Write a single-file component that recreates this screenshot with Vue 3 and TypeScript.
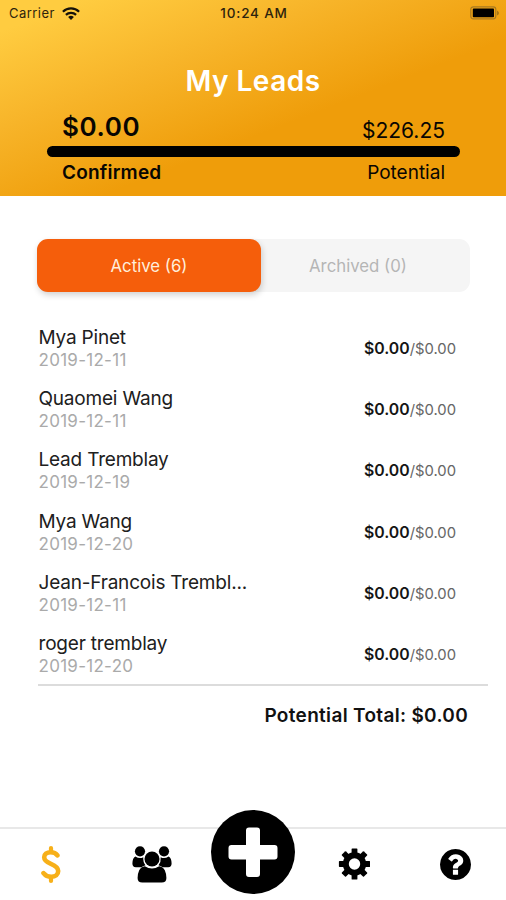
<script setup lang="ts">
import { ref } from 'vue'

interface Lead {
  name: string
  date: string
  confirmed: string
  potential: string
}

const leads: Lead[] = [
  { name: 'Mya Pinet', date: '2019-12-11', confirmed: '$0.00', potential: '$0.00' },
  { name: 'Quaomei Wang', date: '2019-12-11', confirmed: '$0.00', potential: '$0.00' },
  { name: 'Lead Tremblay', date: '2019-12-19', confirmed: '$0.00', potential: '$0.00' },
  { name: 'Mya Wang', date: '2019-12-20', confirmed: '$0.00', potential: '$0.00' },
  { name: 'Jean-Francois Trembl...', date: '2019-12-11', confirmed: '$0.00', potential: '$0.00' },
  { name: 'roger tremblay', date: '2019-12-20', confirmed: '$0.00', potential: '$0.00' },
]

const tabs = ['Active (6)', 'Archived (0)']
const selected = ref(0)
const teeth = [0, 45, 90, 135, 180, 225, 270, 315]
</script>

<template>
  <div class="screen">
    <header class="hero">
      <div class="status">
        <div class="carrier">
          <span>Carrier</span>
          <svg class="wifi" viewBox="0 0 18 13">
            <g fill="none" stroke="#17120a" stroke-width="2.2">
              <path d="M.9 4.7a11.6 11.6 0 0 1 16.200 0" />
              <path d="M3.900 7.900a7.300 7.300 0 0 1 10.200 0" />
            </g>
            <path fill="#17120a" d="M6.100 10.100a4.200 4.200 0 0 1 5.800 0L9 13z" />
          </svg>
        </div>
        <span class="clock">10:24 AM</span>
        <div class="power">
          <svg class="battery" viewBox="0 0 29 14">
            <rect x=".8" y=".8" width="25" height="12" rx="2.500" fill="none" stroke="#a87a20" stroke-width="1.200" />
            <rect x="2.800" y="2.600" width="21.200" height="8.600" rx=".8" />
            <path fill="#a87616" d="M27 4.500q2 1 2 2.500t-2 2.500z" />
          </svg>
        </div>
      </div>
      <h1>My Leads</h1>
      <div class="amounts">
        <strong>$0.00</strong>
        <span>$226.25</span>
      </div>
      <div class="bar"></div>
      <div class="labels">
        <strong>Confirmed</strong>
        <span>Potential</span>
      </div>
    </header>

    <main>
      <div class="tabs">
        <button v-for="(tab, i) in tabs" :key="tab" :class="{ on: selected === i }" @click="selected = i">
          {{ tab }}
        </button>
      </div>
      <ul class="leads">
        <li v-for="lead in leads" :key="lead.name">
          <div>
            <div class="name">{{ lead.name }}</div>
            <div class="date">{{ lead.date }}</div>
          </div>
          <div class="sum"><b>{{ lead.confirmed }}</b><span>/{{ lead.potential }}</span></div>
        </li>
      </ul>
      <div class="total"><span>Potential Total: $0.00</span></div>
    </main>

    <nav>
      <a>
        <svg class="dollar" viewBox="0 0 20 37">
          <g fill="none" stroke="#f7b019" stroke-linecap="round" stroke-linejoin="round">
            <path stroke-width="4.200" d="M10 2.100v4M10 31v3.900" />
            <path stroke-width="4.600" d="M16.400 9.400C14.800 7.100 12.500 6.300 9.700 6.300 5.700 6.300 3.200 8.300 3.200 11.300c0 3.400 2.600 4.900 6.700 6.500 4.400 1.800 7.300 3.500 7.300 7.200 0 3.500-2.800 5.800-7 5.800-3.400 0-5.900-1.300-7.700-3.700" />
          </g>
        </svg>
      </a>
      <a>
        <svg class="people" viewBox="0 0 40 37">
          <circle cx="20" cy="13" r="7.500" />
          <circle cx="8" cy="5.300" r="5.100" />
          <circle cx="32" cy="5.300" r="5.100" />
          <path d="M3.400 10.500Q7.500 13.200 11.300 11.200q-.5 4.600 2.200 8.100-2.600 1-4.200 1.900H3.800Q.4 21.200.4 17.600q0-5.400 3-7.100z" />
          <path d="M36.600 10.500Q32.500 13.200 28.700 11.200q.5 4.600-2.200 8.100 2.600 1 4.200 1.900h5.500q3.400 0 3.400-3.600 0-5.400-3-7.100z" />
          <path d="M12.800 20.200Q20 24.800 27.200 20.200 31 20.700 32.800 24.200q1.600 3.400 1.600 7.800 0 4.600-4.700 4.600H10.300q-4.700 0-4.700-4.600 0-4.400 1.600-7.800 1.800-3.500 5.600-4z" />
        </svg>
      </a>
      <a>
        <svg class="add" viewBox="0 0 84 84">
          <circle cx="42" cy="42" r="42" />
          <path fill="#fff" d="M38 17.500h8q3 0 3 3V35h14.500q3 0 3 3v8.500q0 3-3 3H49V64q0 3-3 3h-8q-3 0-3-3V49.500H20.500q-3 0-3-3V38q0-3 3-3H35V20.500q0-3 3-3z" />
        </svg>
      </a>
      <a>
        <svg class="gear" viewBox="-16.500 -16 32 32">
          <circle r="8.700" fill="none" stroke="#000" stroke-width="6" />
          <rect v-for="t in teeth" :key="t" x="-2.900" y="-15.600" width="5.800" height="7" rx=".7" :transform="`rotate(${t})`" />
        </svg>
      </a>
      <a>
        <svg class="help" viewBox="128 128 1536 1536">
          <path d="M1024 1376v-192q0-14-9-23t-23-9H800q-14 0-23 9t-9 23v192q0 14 9 23t23 9h192q14 0 23-9t9-23zm256-672q0-88-55.500-163t-138.500-116-170-41q-243 0-371 213-15 24 8 42l132 100q7 6 19 6 16 0 25-12 53-68 86-92 34-24 86-24 48 0 85.500 26t37.500 59q0 38-20 61t-68 45q-63 28-115.500 86.500T768 1020v36q0 14 9 23t23 9h192q14 0 23-9t9-23q0-19 21.500-49.500t54.500-49.500q32-18 49-28.500t46-35 44.500-48 28-60.500 12.500-81zm384 192q0 209-103 385.500t-279.500 279.500T896 1664t-385.500-103T231 1281.500 128 896t103-385.500T510.500 231 896 128t385.500 103T1561 510.500 1664 896z" />
        </svg>
      </a>
    </nav>
  </div>
</template>

<style>
body {
  margin: 0;
  background: #fff;
}
</style>

<style scoped>
.screen {
  width: 506px;
  height: 900px;
  display: flex;
  flex-direction: column;
  overflow: hidden;
  background: #fff;
  color: #111;
  font-family: Inter, "Liberation Sans", sans-serif;
}
.hero {
  height: 196px;
  flex: none;
  background: linear-gradient(to bottom right, #ffcc40 8%, #f7b429 33%, #ef9d0a 60%);
}
.status {
  display: grid;
  grid-template-columns: 1fr auto 1fr;
  align-items: center;
  height: 26px;
  padding: 0 7px 0 9px;
  font-size: 13px;
  line-height: 26px;
  color: #2e240d;
}
.carrier {
  display: flex;
  align-items: center;
  gap: 7px;
  letter-spacing: 0.45px;
}
.wifi {
  width: 18px;
  height: 13px;
}
.clock {
  font-size: 13.500px;
  font-weight: 500;
  letter-spacing: 0.8px;
}
.power {
  display: flex;
  justify-content: flex-end;
}
.battery {
  width: 29px;
  height: 14px;
}
h1 {
  margin: 37px 0 0;
  height: 35px;
  line-height: 36px;
  text-align: center;
  font-size: 28px;
  font-weight: 600;
  letter-spacing: 0.5px;
  color: #fff;
}
.amounts,
.labels {
  display: flex;
  justify-content: space-between;
  align-items: baseline;
  padding: 0 61px 0 62px;
  color: #080602;
}
.amounts {
  height: 48px;
  line-height: 57px;
}
.amounts strong {
  font-size: 26px;
  font-weight: 600;
  letter-spacing: 0.6px;
}
.amounts span {
  font-size: 21px;
  position: relative;
  top: 2px;
}
.bar {
  height: 11px;
  margin: 0 46px 0 47px;
  border-radius: 6px;
  background: #000;
}
.labels {
  line-height: 32px;
  font-size: 19px;
}
.labels strong {
  font-weight: 600;
  letter-spacing: 0.2px;
}
main {
  flex: 1;
  padding: 43px 18px 0 37px;
}
.tabs {
  display: flex;
  width: 433px;
  height: 53px;
  border-radius: 11px;
  background: #f5f5f5;
}
.tabs button {
  flex: 1;
  border: 0;
  padding: 0 15px 0 0;
  background: none;
  font-family: inherit;
  font-size: 16.800px;
  color: #b5b5b5;
}
.tabs .on {
  flex: 0 0 224px;
  padding: 0;
  border-radius: 11px;
  background: #f55e0b;
  color: #ffeedb;
  box-shadow: 1px 3px 6px rgba(0, 0, 0, 0.18);
}
.leads {
  list-style: none;
  margin: 0 0 0 1px;
  padding: 34px 0 0;
  border-bottom: 2px solid #dcdcdc;
}
.leads li {
  display: flex;
  justify-content: space-between;
  height: 61.200px;
  padding-right: 32px;
}
.leads li:last-child {
  height: 52px;
}
.name {
  font-size: 19px;
  line-height: 23px;
  letter-spacing: -0.2px;
  color: #202020;
}
.date {
  font-size: 17px;
  line-height: 22px;
  letter-spacing: 0.28px;
  color: #aaa;
}
.name,
.date {
  padding-left: 0.500px;
}
.sum {
  line-height: 45px;
  font-size: 14.800px;
  color: #666;
}
.sum b {
  font-size: 15.800px;
  font-weight: 600;
  color: #151515;
}
.total {
  padding: 18px 20px 0 0;
  text-align: right;
  font-size: 19px;
  line-height: 24px;
  font-weight: 600;
  letter-spacing: 0.32px;
}
nav {
  flex: none;
  display: grid;
  grid-template-columns: repeat(5, 1fr);
  height: 71px;
  border-top: 2px solid #e8e8e8;
}
nav a {
  display: flex;
  justify-content: center;
  align-items: center;
  height: 70px;
}
nav svg {
  flex: none;
}
.dollar {
  width: 20px;
  height: 37px;
}
.people {
  width: 40px;
  height: 37px;
}
.add {
  width: 84px;
  height: 84px;
  margin-top: -25px;
}
.gear {
  width: 32px;
  height: 32px;
}
.help {
  width: 31px;
  height: 31px;
  margin-left: 1px;
}
</style>
